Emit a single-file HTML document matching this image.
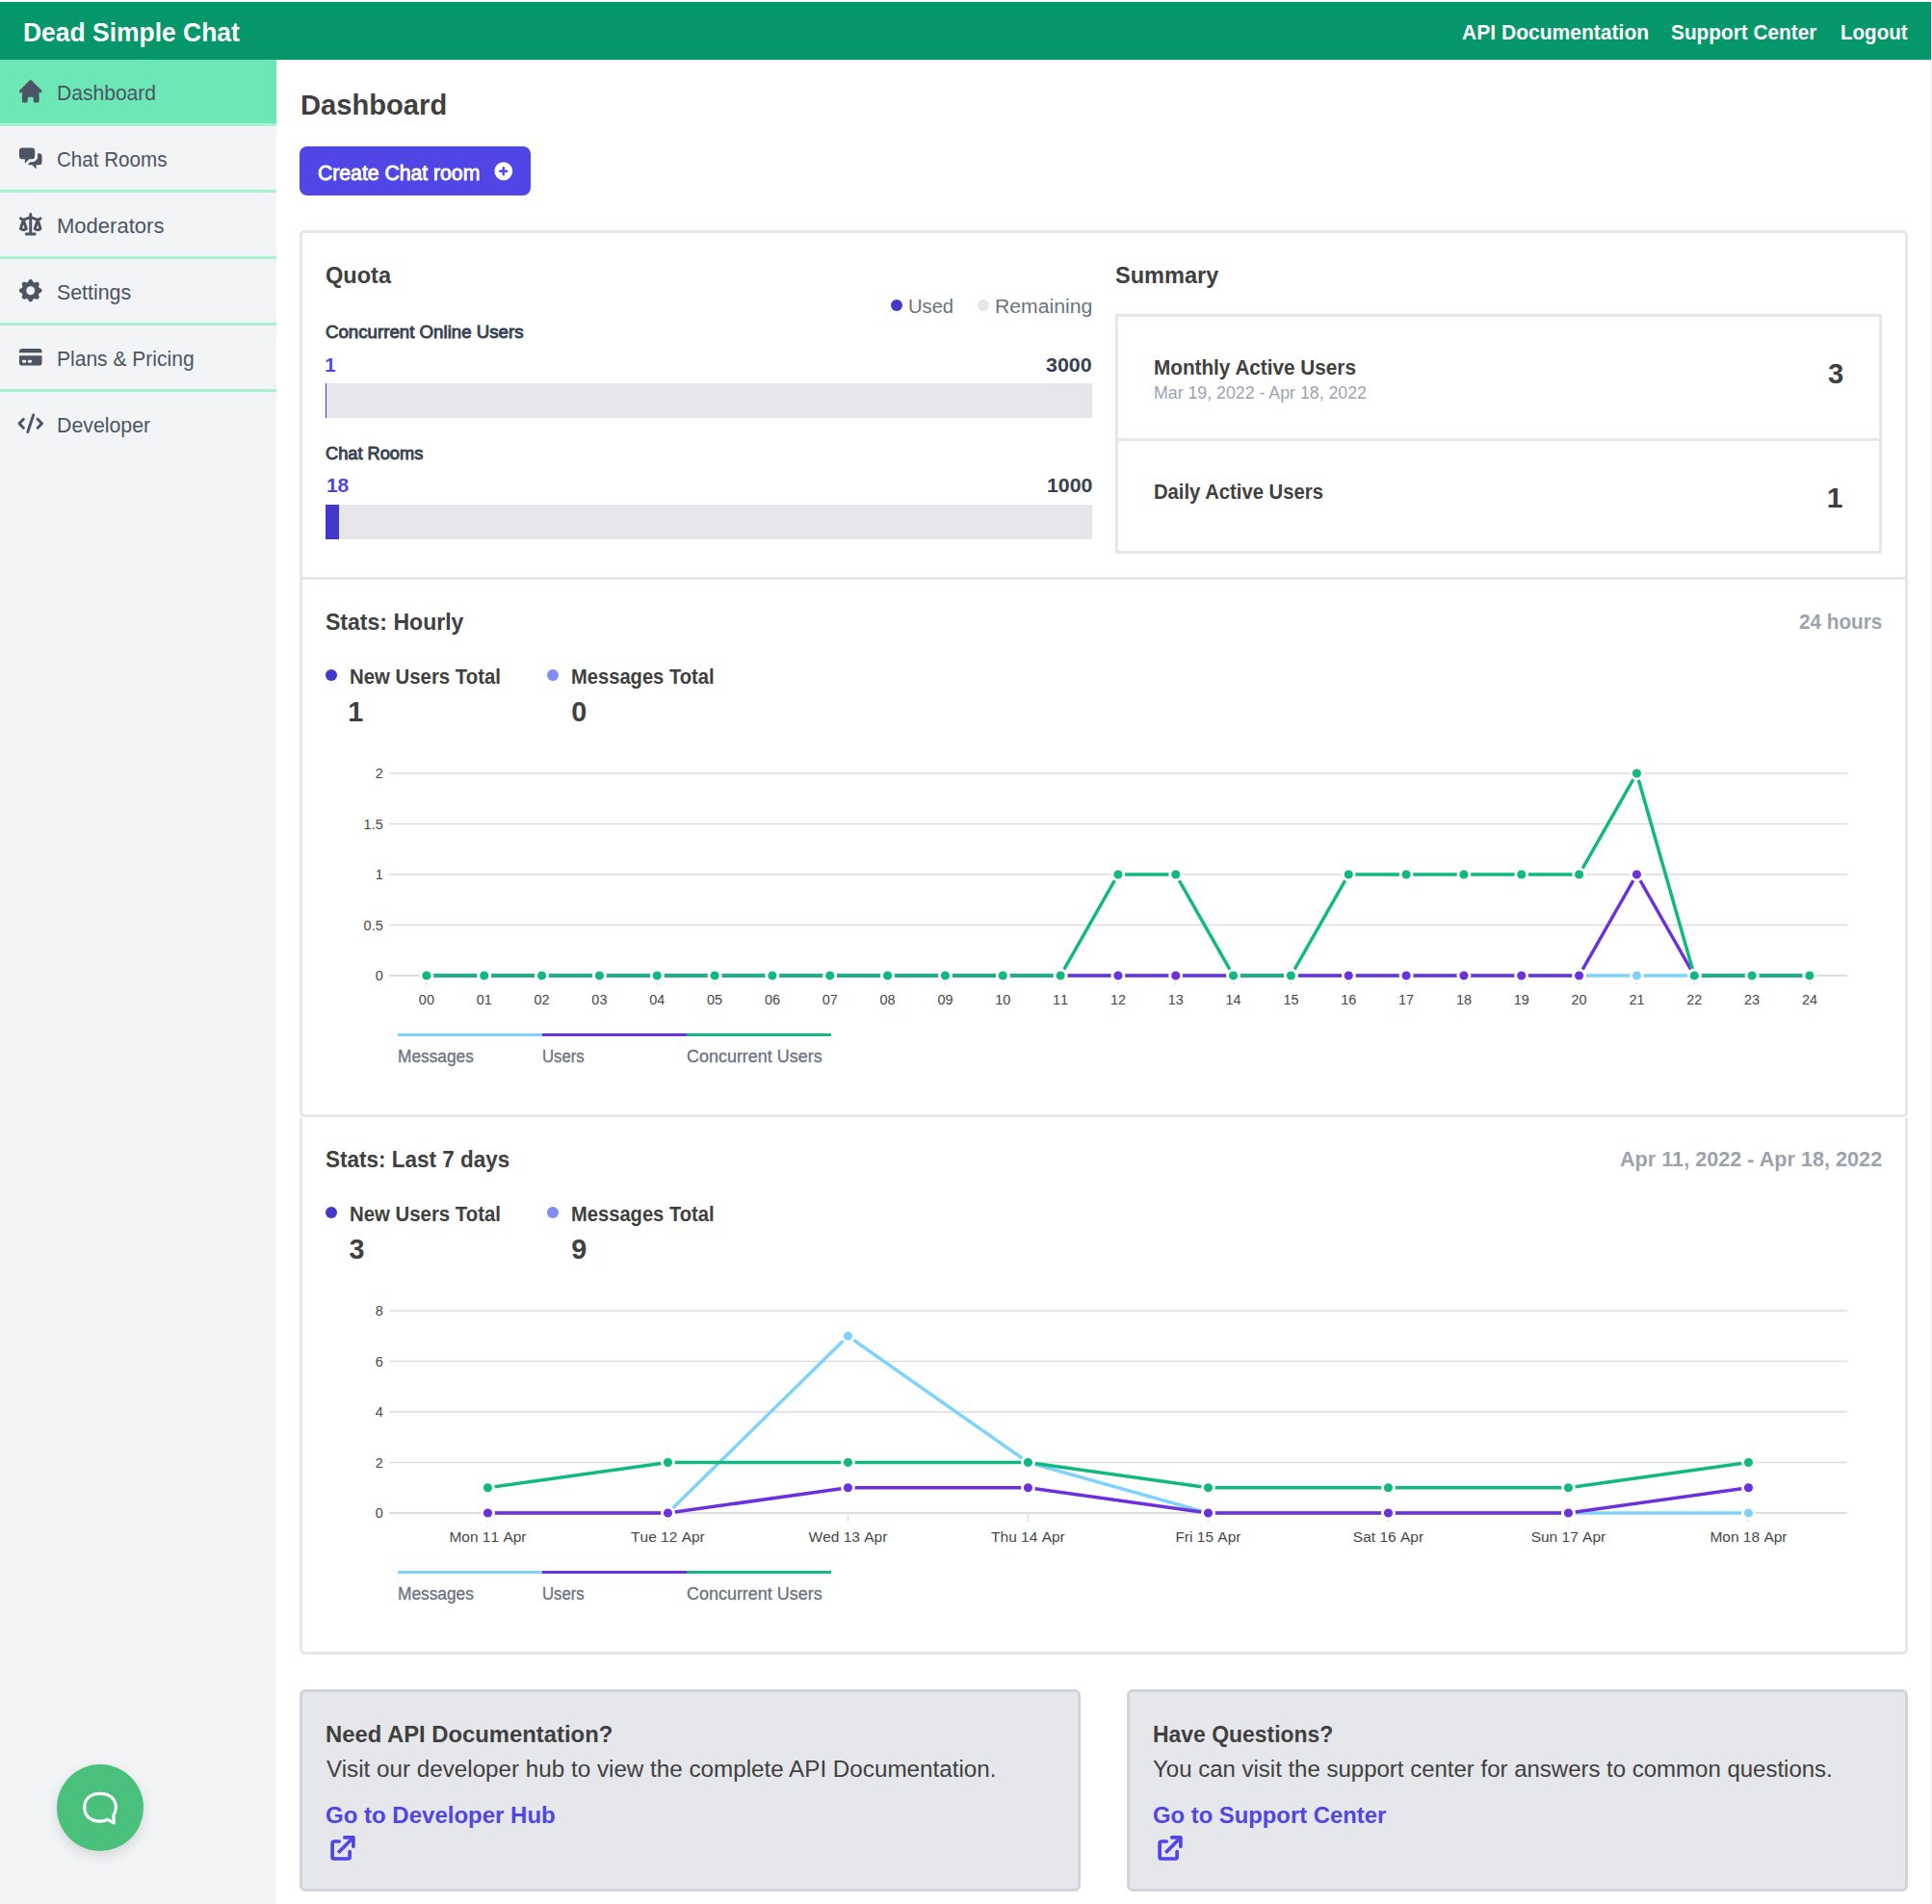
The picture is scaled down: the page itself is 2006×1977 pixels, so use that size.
<!DOCTYPE html><html lang="en"><head><meta charset="utf-8"><title>Dead Simple Chat - Dashboard</title><style>
*{box-sizing:border-box;margin:0;padding:0}
html,body{width:2006px;height:1977px;background:#fff;overflow:hidden}
body{position:relative;font-family:"Liberation Sans",sans-serif;color:#404040}
a{text-decoration:none}
.t{position:absolute;white-space:nowrap;line-height:1;transform-origin:0 50%;display:block}
header.topbar{position:absolute;left:0;top:2px;width:2005px;height:60px;background:#059669}
nav.sidebar{position:absolute;left:0;top:62px;width:287px;height:1915px;background:#f3f4f6}
nav.sidebar a.item{position:absolute;left:0;width:287px;height:69px;border-bottom:3px solid #a7f3d0;display:block}
nav.sidebar a.active{background:#6ee7b7}
nav.sidebar a.last{border-bottom:0}
nav.sidebar svg{position:absolute;left:16.6px;top:18.25px;width:29.5px;height:29.5px;fill:#4b5563}
main{position:absolute;left:287px;top:62px;width:1718px;height:1915px}
.btn{position:absolute;left:24px;top:90px;width:240px;height:51px;border-radius:8px;background:#4f46e5;border:0}
.card{position:absolute;border:3px solid #e5e7eb;background:#fff}
.sep{position:absolute;background:#e5e7eb}
.bar{position:absolute;width:796px;height:36px;background:#e5e7eb}
.bar i{position:absolute;left:0;top:0;height:36px;background:#4338ca;display:block}
.semi{-webkit-text-stroke:0.85px currentColor}
.med{-webkit-text-stroke:0.3px #6b7280}
.dot{position:absolute;border-radius:50%;display:block}
.help{position:absolute;border:3px solid #d1d5db;background:#e5e7eb;border-radius:6px}
.chat{position:absolute;left:59px;top:1832px;width:90px;height:90px;border-radius:50%;background:#49c17d;box-shadow:0 5px 14px rgba(0,0,0,.13);border:0}
svg{display:block;overflow:visible;position:absolute}
svg text{font-family:"Liberation Sans",sans-serif;font-kerning:none}
</style></head><body>
<header class="topbar">
<a class="t " style="left:23.81px;top:19.00px;font-size:26.89px;font-weight:700;color:#fff;transform:scaleX(0.9842)">Dead Simple Chat</a>
<nav>
<a class="t " style="left:1517.52px;top:21.20px;font-size:21.66px;font-weight:700;color:#fff;transform:scaleX(0.9720)">API Documentation</a>
<a class="t " style="left:1735.33px;top:21.20px;font-size:21.66px;font-weight:700;color:#fff;transform:scaleX(0.9608)">Support Center</a>
<a class="t " style="left:1911.41px;top:21.20px;font-size:21.66px;font-weight:700;color:#fff;transform:scaleX(0.9493)">Logout</a>
</nav></header>
<nav class="sidebar">
<a class="item active" style="top:0px"><svg viewBox="0 0 20 20"><path d="M10.707 2.293a1 1 0 00-1.414 0l-7 7a1 1 0 001.414 1.414L4 10.414V17a1 1 0 001 1h2a1 1 0 001-1v-2a1 1 0 011-1h2a1 1 0 011 1v2a1 1 0 001 1h2a1 1 0 001-1v-6.586l.293.293a1 1 0 001.414-1.414l-7-7z"/></svg>
<span class="t " style="left:59.06px;top:24.50px;font-size:21.51px;font-weight:400;color:#4b5563;transform:scaleX(0.9797)">Dashboard</span>
</a>
<a class="item " style="top:69px"><svg viewBox="0 0 20 20"><path d="M2 5a2 2 0 012-2h7a2 2 0 012 2v4a2 2 0 01-2 2H9l-3 3v-3H4a2 2 0 01-2-2V5z"/><path d="M15 7v2a4 4 0 01-4 4H9.828l-1.766 1.767c.28.149.599.233.938.233h2l3 3v-3h2a2 2 0 002-2V9a2 2 0 00-2-2h-1z"/></svg>
<span class="t " style="left:58.92px;top:24.50px;font-size:21.51px;font-weight:400;color:#4b5563;transform:scaleX(0.9577)">Chat Rooms</span>
</a>
<a class="item " style="top:138px"><svg viewBox="0 0 20 20"><path fill-rule="evenodd" clip-rule="evenodd" d="M10 2a1 1 0 011 1v1.323l3.954 1.582 1.599-.8a1 1 0 01.894 1.79l-1.233.616 1.738 5.42a1 1 0 01-.285 1.05A3.989 3.989 0 0115 15a3.989 3.989 0 01-2.667-1.019 1 1 0 01-.285-1.05l1.715-5.349L11 6.477V16h2a1 1 0 110 2H7a1 1 0 110-2h2V6.477L6.237 7.582l1.715 5.349a1 1 0 01-.285 1.05A3.989 3.989 0 015 15a3.989 3.989 0 01-2.667-1.019 1 1 0 01-.285-1.05l1.738-5.42-1.233-.617a1 1 0 01.894-1.788l1.599.799L9 4.323V3a1 1 0 011-1zm-5 8.274l-.818 2.552c.25.112.526.174.818.174.292 0 .569-.062.818-.174L5 10.274zm10 0l-.818 2.552c.25.112.526.174.818.174.292 0 .569-.062.818-.174L15 10.274z"/></svg>
<span class="t " style="left:58.98px;top:24.50px;font-size:21.51px;font-weight:400;color:#4b5563;transform:scaleX(1.0248)">Moderators</span>
</a>
<a class="item " style="top:207px"><svg viewBox="0 0 20 20"><path fill-rule="evenodd" clip-rule="evenodd" d="M11.49 3.17c-.38-1.56-2.6-1.56-2.98 0a1.532 1.532 0 01-2.286.948c-1.372-.836-2.942.734-2.106 2.106.54.886.061 2.042-.947 2.287-1.561.379-1.561 2.6 0 2.978a1.532 1.532 0 01.947 2.287c-.836 1.372.734 2.942 2.106 2.106a1.532 1.532 0 012.287.947c.379 1.561 2.6 1.561 2.978 0a1.533 1.533 0 012.287-.947c1.372.836 2.942-.734 2.106-2.106a1.533 1.533 0 01.947-2.287c1.561-.379 1.561-2.6 0-2.978a1.532 1.532 0 01-.947-2.287c.836-1.372-.734-2.942-2.106-2.106a1.532 1.532 0 01-2.287-.947zM10 13a3 3 0 100-6 3 3 0 000 6z"/></svg>
<span class="t " style="left:58.99px;top:24.50px;font-size:21.51px;font-weight:400;color:#4b5563;transform:scaleX(0.9929)">Settings</span>
</a>
<a class="item " style="top:276px"><svg viewBox="0 0 20 20"><path d="M4 4a2 2 0 00-2 2v1h16V6a2 2 0 00-2-2H4z"/><path fill-rule="evenodd" clip-rule="evenodd" d="M18 9H2v5a2 2 0 002 2h12a2 2 0 002-2V9zM4 13a1 1 0 011-1h1a1 1 0 110 2H5a1 1 0 01-1-1zm5-1a1 1 0 100 2h1a1 1 0 100-2H9z"/></svg>
<span class="t " style="left:59.06px;top:24.50px;font-size:21.51px;font-weight:400;color:#4b5563;transform:scaleX(0.9781)">Plans &amp; Pricing</span>
</a>
<a class="item last" style="top:345px"><svg viewBox="0 0 20 20"><path fill-rule="evenodd" clip-rule="evenodd" d="M12.316 3.051a1 1 0 01.633 1.265l-4 12a1 1 0 11-1.898-.632l4-12a1 1 0 011.265-.633zM5.707 6.293a1 1 0 010 1.414L3.414 10l2.293 2.293a1 1 0 11-1.414 1.414l-3-3a1 1 0 010-1.414l3-3a1 1 0 011.414 0zm8.586 0a1 1 0 011.414 0l3 3a1 1 0 010 1.414l-3 3a1 1 0 11-1.414-1.414L16.586 10l-2.293-2.293a1 1 0 010-1.414z"/></svg>
<span class="t " style="left:59.04px;top:24.50px;font-size:21.51px;font-weight:400;color:#4b5563;transform:scaleX(0.9912)">Developer</span>
</a>
</nav>
<main>
<h1 class="t " style="left:24.53px;top:31.80px;font-size:30.23px;font-weight:700;color:#404040;transform:scaleX(0.9643)">Dashboard</h1>
<button class="btn">
<span class="t semi" style="left:19.39px;top:16.70px;font-size:21.66px;font-weight:400;color:#fff;transform:scaleX(0.9777)">Create Chat room</span>
<svg viewBox="0 0 20 20" style="left:200.20px;top:14.40px;width:23.6px;height:23.6px;fill:#fff"><path fill-rule="evenodd" clip-rule="evenodd" d="M10 18a8 8 0 100-16 8 8 0 000 16zm1-11a1 1 0 10-2 0v2H7a1 1 0 100 2h2v2a1 1 0 102 0v-2h2a1 1 0 100-2h-2V7z"/></svg>
</button>
<section class="card" style="left:24px;top:177px;width:1670px;height:921px;border-radius:5px">
<div class="quota">
<h2 class="t " style="left:23.91px;top:31.80px;font-size:24.13px;font-weight:700;color:#404040;transform:scaleX(0.9762)">Quota</h2>
<i class="dot" style="left:610.8px;top:68.9px;width:12.4px;height:12.4px;background:#4338ca"></i>
<span class="t " style="left:629.44px;top:66.30px;font-size:20.79px;font-weight:400;color:#6b7280;transform:scaleX(0.9699)">Used</span>
<i class="dot" style="left:701.0px;top:68.9px;width:12.4px;height:12.4px;background:#e5e7eb"></i>
<span class="t " style="left:719.15px;top:66.30px;font-size:20.79px;font-weight:400;color:#6b7280;transform:scaleX(1.0193)">Remaining</span>
<span class="t semi" style="left:23.92px;top:94.80px;font-size:17.88px;font-weight:400;color:#374151;transform:scaleX(1.0457)">Concurrent Online Users</span>
<span class="t " style="left:23.23px;top:126.70px;font-size:20.49px;font-weight:700;color:#4f46e5;transform:scaleX(1.0000)">1</span>
<span class="t " style="left:772.47px;top:126.70px;font-size:20.49px;font-weight:700;color:#374151;transform:scaleX(1.0425)">3000</span>
<div class="bar" style="left:24px;top:156px"><i style="width:1px"></i></div>
<span class="t semi" style="left:23.94px;top:220.80px;font-size:17.59px;font-weight:400;color:#374151;transform:scaleX(1.0364)">Chat Rooms</span>
<span class="t " style="left:24.54px;top:252.40px;font-size:20.35px;font-weight:700;color:#4f46e5;transform:scaleX(1.0263)">18</span>
<span class="t " style="left:772.62px;top:252.40px;font-size:20.35px;font-weight:700;color:#374151;transform:scaleX(1.0466)">1000</span>
<div class="bar" style="left:24px;top:282px"><i style="width:14px"></i></div>
</div>
<div class="summary">
<h2 class="t " style="left:844.14px;top:31.80px;font-size:24.13px;font-weight:700;color:#404040;transform:scaleX(0.9755)">Summary</h2>
<div style="position:absolute;left:844px;top:84px;width:796px;height:249px;border:3px solid #e5e7eb">
<div class="sep" style="left:0;top:126px;width:790px;height:3px"></div>
<span class="t " style="left:36.60px;top:41.90px;font-size:21.22px;font-weight:700;color:#404040;transform:scaleX(0.9763)">Monthly Active Users</span>
<span class="t " style="left:36.53px;top:70.60px;font-size:17.73px;font-weight:400;color:#9ca3af;transform:scaleX(1.0015)">Mar 19, 2022 - Apr 18, 2022</span>
<span class="t " style="left:737.06px;top:43.80px;font-size:29.36px;font-weight:700;color:#404040;transform:scaleX(1.0000)">3</span>
<span class="t " style="left:36.63px;top:172.00px;font-size:21.51px;font-weight:700;color:#404040;transform:scaleX(0.9414)">Daily Active Users</span>
<span class="t " style="left:735.64px;top:173.20px;font-size:29.94px;font-weight:700;color:#404040;transform:scaleX(1.0000)">1</span>
</div></div>
<div class="sep" style="left:0;top:357px;width:1664px;height:3px"></div>
<div class="stats">
<h2 class="t " style="left:24.36px;top:392.00px;font-size:23.98px;font-weight:700;color:#404040;transform:scaleX(0.9613)">Stats: Hourly</h2>
<span class="t " style="left:1554.13px;top:393.40px;font-size:22.53px;font-weight:700;color:#9ca3af;transform:scaleX(0.9192)">24 hours</span>
<i class="dot" style="left:23.8px;top:453.0px;width:12.4px;height:12.4px;background:#4338ca"></i>
<span class="t " style="left:49.22px;top:451.00px;font-size:21.51px;font-weight:700;color:#404040;transform:scaleX(0.9472)">New Users Total</span>
<span class="t " style="left:47.14px;top:482.70px;font-size:28.78px;font-weight:700;color:#404040;transform:scaleX(1.0000)">1</span>
<i class="dot" style="left:253.8px;top:453.0px;width:12.4px;height:12.4px;background:#818cf8"></i>
<span class="t " style="left:279.24px;top:451.00px;font-size:21.51px;font-weight:700;color:#404040;transform:scaleX(0.9368)">Messages Total</span>
<span class="t " style="left:279.19px;top:482.70px;font-size:28.78px;font-weight:700;color:#404040;transform:scaleX(1.0000)">0</span>
<svg width="1616" height="290" style="left:24px;top:528px" role="img"><g transform="translate(-338,-770)">
<line x1="404" x2="1918" y1="803.00" y2="803.00" stroke="#dddddd" stroke-width="1.4"/>
<line x1="404" x2="1918" y1="855.50" y2="855.50" stroke="#dddddd" stroke-width="1.4"/>
<line x1="404" x2="1918" y1="908.00" y2="908.00" stroke="#dddddd" stroke-width="1.4"/>
<line x1="404" x2="1918" y1="960.50" y2="960.50" stroke="#dddddd" stroke-width="1.4"/>
<line x1="404" x2="1918" y1="1013.00" y2="1013.00" stroke="#dddddd" stroke-width="1.9"/>
<text x="397.7" y="808.00" text-anchor="end" font-size="14.44" fill="#474747">2</text>
<text x="397.7" y="860.50" text-anchor="end" font-size="14.44" fill="#474747">1.5</text>
<text x="397.7" y="913.00" text-anchor="end" font-size="14.44" fill="#474747">1</text>
<text x="397.7" y="965.50" text-anchor="end" font-size="14.44" fill="#474747">0.5</text>
<text x="397.7" y="1018.00" text-anchor="end" font-size="14.44" fill="#474747">0</text>
<line x1="442.90" x2="442.90" y1="1013.00" y2="1022.20" stroke="#dddddd" stroke-width="1.4"/>
<text x="442.90" y="1043.00" text-anchor="middle" font-size="14.44" fill="#474747">00</text>
<line x1="502.73" x2="502.73" y1="1013.00" y2="1022.20" stroke="#dddddd" stroke-width="1.4"/>
<text x="502.73" y="1043.00" text-anchor="middle" font-size="14.44" fill="#474747">01</text>
<line x1="562.57" x2="562.57" y1="1013.00" y2="1022.20" stroke="#dddddd" stroke-width="1.4"/>
<text x="562.57" y="1043.00" text-anchor="middle" font-size="14.44" fill="#474747">02</text>
<line x1="622.40" x2="622.40" y1="1013.00" y2="1022.20" stroke="#dddddd" stroke-width="1.4"/>
<text x="622.40" y="1043.00" text-anchor="middle" font-size="14.44" fill="#474747">03</text>
<line x1="682.24" x2="682.24" y1="1013.00" y2="1022.20" stroke="#dddddd" stroke-width="1.4"/>
<text x="682.24" y="1043.00" text-anchor="middle" font-size="14.44" fill="#474747">04</text>
<line x1="742.08" x2="742.08" y1="1013.00" y2="1022.20" stroke="#dddddd" stroke-width="1.4"/>
<text x="742.08" y="1043.00" text-anchor="middle" font-size="14.44" fill="#474747">05</text>
<line x1="801.91" x2="801.91" y1="1013.00" y2="1022.20" stroke="#dddddd" stroke-width="1.4"/>
<text x="801.91" y="1043.00" text-anchor="middle" font-size="14.44" fill="#474747">06</text>
<line x1="861.75" x2="861.75" y1="1013.00" y2="1022.20" stroke="#dddddd" stroke-width="1.4"/>
<text x="861.75" y="1043.00" text-anchor="middle" font-size="14.44" fill="#474747">07</text>
<line x1="921.58" x2="921.58" y1="1013.00" y2="1022.20" stroke="#dddddd" stroke-width="1.4"/>
<text x="921.58" y="1043.00" text-anchor="middle" font-size="14.44" fill="#474747">08</text>
<line x1="981.41" x2="981.41" y1="1013.00" y2="1022.20" stroke="#dddddd" stroke-width="1.4"/>
<text x="981.41" y="1043.00" text-anchor="middle" font-size="14.44" fill="#474747">09</text>
<line x1="1041.25" x2="1041.25" y1="1013.00" y2="1022.20" stroke="#dddddd" stroke-width="1.4"/>
<text x="1041.25" y="1043.00" text-anchor="middle" font-size="14.44" fill="#474747">10</text>
<line x1="1101.09" x2="1101.09" y1="1013.00" y2="1022.20" stroke="#dddddd" stroke-width="1.4"/>
<text x="1101.09" y="1043.00" text-anchor="middle" font-size="14.44" fill="#474747">11</text>
<line x1="1160.92" x2="1160.92" y1="1013.00" y2="1022.20" stroke="#dddddd" stroke-width="1.4"/>
<text x="1160.92" y="1043.00" text-anchor="middle" font-size="14.44" fill="#474747">12</text>
<line x1="1220.76" x2="1220.76" y1="1013.00" y2="1022.20" stroke="#dddddd" stroke-width="1.4"/>
<text x="1220.76" y="1043.00" text-anchor="middle" font-size="14.44" fill="#474747">13</text>
<line x1="1280.59" x2="1280.59" y1="1013.00" y2="1022.20" stroke="#dddddd" stroke-width="1.4"/>
<text x="1280.59" y="1043.00" text-anchor="middle" font-size="14.44" fill="#474747">14</text>
<line x1="1340.42" x2="1340.42" y1="1013.00" y2="1022.20" stroke="#dddddd" stroke-width="1.4"/>
<text x="1340.42" y="1043.00" text-anchor="middle" font-size="14.44" fill="#474747">15</text>
<line x1="1400.26" x2="1400.26" y1="1013.00" y2="1022.20" stroke="#dddddd" stroke-width="1.4"/>
<text x="1400.26" y="1043.00" text-anchor="middle" font-size="14.44" fill="#474747">16</text>
<line x1="1460.10" x2="1460.10" y1="1013.00" y2="1022.20" stroke="#dddddd" stroke-width="1.4"/>
<text x="1460.10" y="1043.00" text-anchor="middle" font-size="14.44" fill="#474747">17</text>
<line x1="1519.93" x2="1519.93" y1="1013.00" y2="1022.20" stroke="#dddddd" stroke-width="1.4"/>
<text x="1519.93" y="1043.00" text-anchor="middle" font-size="14.44" fill="#474747">18</text>
<line x1="1579.76" x2="1579.76" y1="1013.00" y2="1022.20" stroke="#dddddd" stroke-width="1.4"/>
<text x="1579.76" y="1043.00" text-anchor="middle" font-size="14.44" fill="#474747">19</text>
<line x1="1639.60" x2="1639.60" y1="1013.00" y2="1022.20" stroke="#dddddd" stroke-width="1.4"/>
<text x="1639.60" y="1043.00" text-anchor="middle" font-size="14.44" fill="#474747">20</text>
<line x1="1699.43" x2="1699.43" y1="1013.00" y2="1022.20" stroke="#dddddd" stroke-width="1.4"/>
<text x="1699.43" y="1043.00" text-anchor="middle" font-size="14.44" fill="#474747">21</text>
<line x1="1759.27" x2="1759.27" y1="1013.00" y2="1022.20" stroke="#dddddd" stroke-width="1.4"/>
<text x="1759.27" y="1043.00" text-anchor="middle" font-size="14.44" fill="#474747">22</text>
<line x1="1819.11" x2="1819.11" y1="1013.00" y2="1022.20" stroke="#dddddd" stroke-width="1.4"/>
<text x="1819.11" y="1043.00" text-anchor="middle" font-size="14.44" fill="#474747">23</text>
<line x1="1878.94" x2="1878.94" y1="1013.00" y2="1022.20" stroke="#dddddd" stroke-width="1.4"/>
<text x="1878.94" y="1043.00" text-anchor="middle" font-size="14.44" fill="#474747">24</text>
<polyline points="442.90,1013.00 502.73,1013.00 562.57,1013.00 622.40,1013.00 682.24,1013.00 742.08,1013.00 801.91,1013.00 861.75,1013.00 921.58,1013.00 981.41,1013.00 1041.25,1013.00 1101.09,1013.00 1160.92,1013.00 1220.76,1013.00 1280.59,1013.00 1340.42,1013.00 1400.26,1013.00 1460.10,1013.00 1519.93,1013.00 1579.76,1013.00 1639.60,1013.00 1699.43,1013.00 1759.27,1013.00 1819.11,1013.00 1878.94,1013.00" fill="none" stroke="#7dd3fc" stroke-width="3.5" stroke-linejoin="miter"/>
<polyline points="442.90,1013.00 502.73,1013.00 562.57,1013.00 622.40,1013.00 682.24,1013.00 742.08,1013.00 801.91,1013.00 861.75,1013.00 921.58,1013.00 981.41,1013.00 1041.25,1013.00 1101.09,1013.00 1160.92,1013.00 1220.76,1013.00 1280.59,1013.00 1340.42,1013.00 1400.26,1013.00 1460.10,1013.00 1519.93,1013.00 1579.76,1013.00 1639.60,1013.00 1699.43,908.00 1759.27,1013.00 1819.11,1013.00 1878.94,1013.00" fill="none" stroke="#6c30dd" stroke-width="3.5" stroke-linejoin="miter"/>
<polyline points="442.90,1013.00 502.73,1013.00 562.57,1013.00 622.40,1013.00 682.24,1013.00 742.08,1013.00 801.91,1013.00 861.75,1013.00 921.58,1013.00 981.41,1013.00 1041.25,1013.00 1101.09,1013.00 1160.92,908.00 1220.76,908.00 1280.59,1013.00 1340.42,1013.00 1400.26,908.00 1460.10,908.00 1519.93,908.00 1579.76,908.00 1639.60,908.00 1699.43,803.00 1759.27,1013.00 1819.11,1013.00 1878.94,1013.00" fill="none" stroke="#10b981" stroke-width="3.5" stroke-linejoin="miter"/>
<g fill="#7dd3fc" stroke="#fff" stroke-width="2.75">
<circle cx="442.90" cy="1013.00" r="5.95"/>
<circle cx="502.73" cy="1013.00" r="5.95"/>
<circle cx="562.57" cy="1013.00" r="5.95"/>
<circle cx="622.40" cy="1013.00" r="5.95"/>
<circle cx="682.24" cy="1013.00" r="5.95"/>
<circle cx="742.08" cy="1013.00" r="5.95"/>
<circle cx="801.91" cy="1013.00" r="5.95"/>
<circle cx="861.75" cy="1013.00" r="5.95"/>
<circle cx="921.58" cy="1013.00" r="5.95"/>
<circle cx="981.41" cy="1013.00" r="5.95"/>
<circle cx="1041.25" cy="1013.00" r="5.95"/>
<circle cx="1101.09" cy="1013.00" r="5.95"/>
<circle cx="1160.92" cy="1013.00" r="5.95"/>
<circle cx="1220.76" cy="1013.00" r="5.95"/>
<circle cx="1280.59" cy="1013.00" r="5.95"/>
<circle cx="1340.42" cy="1013.00" r="5.95"/>
<circle cx="1400.26" cy="1013.00" r="5.95"/>
<circle cx="1460.10" cy="1013.00" r="5.95"/>
<circle cx="1519.93" cy="1013.00" r="5.95"/>
<circle cx="1579.76" cy="1013.00" r="5.95"/>
<circle cx="1639.60" cy="1013.00" r="5.95"/>
<circle cx="1699.43" cy="1013.00" r="5.95"/>
<circle cx="1759.27" cy="1013.00" r="5.95"/>
<circle cx="1819.11" cy="1013.00" r="5.95"/>
<circle cx="1878.94" cy="1013.00" r="5.95"/>
</g>
<g fill="#6c30dd" stroke="#fff" stroke-width="2.75">
<circle cx="442.90" cy="1013.00" r="5.95"/>
<circle cx="502.73" cy="1013.00" r="5.95"/>
<circle cx="562.57" cy="1013.00" r="5.95"/>
<circle cx="622.40" cy="1013.00" r="5.95"/>
<circle cx="682.24" cy="1013.00" r="5.95"/>
<circle cx="742.08" cy="1013.00" r="5.95"/>
<circle cx="801.91" cy="1013.00" r="5.95"/>
<circle cx="861.75" cy="1013.00" r="5.95"/>
<circle cx="921.58" cy="1013.00" r="5.95"/>
<circle cx="981.41" cy="1013.00" r="5.95"/>
<circle cx="1041.25" cy="1013.00" r="5.95"/>
<circle cx="1101.09" cy="1013.00" r="5.95"/>
<circle cx="1160.92" cy="1013.00" r="5.95"/>
<circle cx="1220.76" cy="1013.00" r="5.95"/>
<circle cx="1280.59" cy="1013.00" r="5.95"/>
<circle cx="1340.42" cy="1013.00" r="5.95"/>
<circle cx="1400.26" cy="1013.00" r="5.95"/>
<circle cx="1460.10" cy="1013.00" r="5.95"/>
<circle cx="1519.93" cy="1013.00" r="5.95"/>
<circle cx="1579.76" cy="1013.00" r="5.95"/>
<circle cx="1639.60" cy="1013.00" r="5.95"/>
<circle cx="1699.43" cy="908.00" r="5.95"/>
<circle cx="1759.27" cy="1013.00" r="5.95"/>
<circle cx="1819.11" cy="1013.00" r="5.95"/>
<circle cx="1878.94" cy="1013.00" r="5.95"/>
</g>
<g fill="#10b981" stroke="#fff" stroke-width="2.75">
<circle cx="442.90" cy="1013.00" r="5.95"/>
<circle cx="502.73" cy="1013.00" r="5.95"/>
<circle cx="562.57" cy="1013.00" r="5.95"/>
<circle cx="622.40" cy="1013.00" r="5.95"/>
<circle cx="682.24" cy="1013.00" r="5.95"/>
<circle cx="742.08" cy="1013.00" r="5.95"/>
<circle cx="801.91" cy="1013.00" r="5.95"/>
<circle cx="861.75" cy="1013.00" r="5.95"/>
<circle cx="921.58" cy="1013.00" r="5.95"/>
<circle cx="981.41" cy="1013.00" r="5.95"/>
<circle cx="1041.25" cy="1013.00" r="5.95"/>
<circle cx="1101.09" cy="1013.00" r="5.95"/>
<circle cx="1160.92" cy="908.00" r="5.95"/>
<circle cx="1220.76" cy="908.00" r="5.95"/>
<circle cx="1280.59" cy="1013.00" r="5.95"/>
<circle cx="1340.42" cy="1013.00" r="5.95"/>
<circle cx="1400.26" cy="908.00" r="5.95"/>
<circle cx="1460.10" cy="908.00" r="5.95"/>
<circle cx="1519.93" cy="908.00" r="5.95"/>
<circle cx="1579.76" cy="908.00" r="5.95"/>
<circle cx="1639.60" cy="908.00" r="5.95"/>
<circle cx="1699.43" cy="803.00" r="5.95"/>
<circle cx="1759.27" cy="1013.00" r="5.95"/>
<circle cx="1819.11" cy="1013.00" r="5.95"/>
<circle cx="1878.94" cy="1013.00" r="5.95"/>
</g>
</g></svg>
<div style="position:absolute;left:99px;top:831px;width:150px;height:3px;background:#7dd3fc"></div>
<span class="t med" style="left:99.27px;top:845.90px;font-size:18.02px;font-weight:400;color:#6b7280;transform:scaleX(0.9597)">Messages</span>
<div style="position:absolute;left:249px;top:831px;width:150px;height:3px;background:#6c30dd"></div>
<span class="t med" style="left:249.40px;top:845.90px;font-size:18.02px;font-weight:400;color:#6b7280;transform:scaleX(0.9299)">Users</span>
<div style="position:absolute;left:399px;top:831px;width:150px;height:3px;background:#10b981"></div>
<span class="t med" style="left:398.95px;top:845.90px;font-size:18.02px;font-weight:400;color:#6b7280;transform:scaleX(0.9962)">Concurrent Users</span>
</div>
</section>
<section class="card" style="left:24px;top:1098px;width:1670px;height:558px;border-top:0;border-radius:0 0 5px 5px">
<div class="stats">
<h2 class="t " style="left:24.37px;top:32.00px;font-size:23.98px;font-weight:700;color:#404040;transform:scaleX(0.9388)">Stats: Last 7 days</h2>
<span class="t " style="left:1368.11px;top:33.40px;font-size:22.53px;font-weight:700;color:#9ca3af;transform:scaleX(0.9608)">Apr 11, 2022 - Apr 18, 2022</span>
<i class="dot" style="left:23.8px;top:93.0px;width:12.4px;height:12.4px;background:#4338ca"></i>
<span class="t " style="left:49.22px;top:91.00px;font-size:21.51px;font-weight:700;color:#404040;transform:scaleX(0.9472)">New Users Total</span>
<span class="t " style="left:48.52px;top:122.70px;font-size:28.78px;font-weight:700;color:#404040;transform:scaleX(1.0000)">3</span>
<i class="dot" style="left:253.8px;top:93.0px;width:12.4px;height:12.4px;background:#818cf8"></i>
<span class="t " style="left:279.24px;top:91.00px;font-size:21.51px;font-weight:700;color:#404040;transform:scaleX(0.9368)">Messages Total</span>
<span class="t " style="left:279.19px;top:122.70px;font-size:28.78px;font-weight:700;color:#404040;transform:scaleX(1.0000)">9</span>
<svg width="1616" height="290" style="left:24px;top:168px" role="img"><g transform="translate(-338,-1328)">
<line x1="404" x2="1918" y1="1361.00" y2="1361.00" stroke="#dddddd" stroke-width="1.4"/>
<line x1="404" x2="1918" y1="1413.50" y2="1413.50" stroke="#dddddd" stroke-width="1.4"/>
<line x1="404" x2="1918" y1="1466.00" y2="1466.00" stroke="#dddddd" stroke-width="1.4"/>
<line x1="404" x2="1918" y1="1518.50" y2="1518.50" stroke="#dddddd" stroke-width="1.4"/>
<line x1="404" x2="1918" y1="1571.00" y2="1571.00" stroke="#dddddd" stroke-width="1.9"/>
<text x="397.7" y="1366.00" text-anchor="end" font-size="14.44" fill="#474747">8</text>
<text x="397.7" y="1418.50" text-anchor="end" font-size="14.44" fill="#474747">6</text>
<text x="397.7" y="1471.00" text-anchor="end" font-size="14.44" fill="#474747">4</text>
<text x="397.7" y="1523.50" text-anchor="end" font-size="14.44" fill="#474747">2</text>
<text x="397.7" y="1576.00" text-anchor="end" font-size="14.44" fill="#474747">0</text>
<line x1="506.45" x2="506.45" y1="1571.00" y2="1580.20" stroke="#dddddd" stroke-width="1.4"/>
<text x="506.45" y="1601.00" text-anchor="middle" font-size="15.50" fill="#474747">Mon 11 Apr</text>
<line x1="693.45" x2="693.45" y1="1571.00" y2="1580.20" stroke="#dddddd" stroke-width="1.4"/>
<text x="693.45" y="1601.00" text-anchor="middle" font-size="15.50" fill="#474747">Tue 12 Apr</text>
<line x1="880.45" x2="880.45" y1="1571.00" y2="1580.20" stroke="#dddddd" stroke-width="1.4"/>
<text x="880.45" y="1601.00" text-anchor="middle" font-size="15.50" fill="#474747">Wed 13 Apr</text>
<line x1="1067.45" x2="1067.45" y1="1571.00" y2="1580.20" stroke="#dddddd" stroke-width="1.4"/>
<text x="1067.45" y="1601.00" text-anchor="middle" font-size="15.50" fill="#474747">Thu 14 Apr</text>
<line x1="1254.45" x2="1254.45" y1="1571.00" y2="1580.20" stroke="#dddddd" stroke-width="1.4"/>
<text x="1254.45" y="1601.00" text-anchor="middle" font-size="15.50" fill="#474747">Fri 15 Apr</text>
<line x1="1441.45" x2="1441.45" y1="1571.00" y2="1580.20" stroke="#dddddd" stroke-width="1.4"/>
<text x="1441.45" y="1601.00" text-anchor="middle" font-size="15.50" fill="#474747">Sat 16 Apr</text>
<line x1="1628.45" x2="1628.45" y1="1571.00" y2="1580.20" stroke="#dddddd" stroke-width="1.4"/>
<text x="1628.45" y="1601.00" text-anchor="middle" font-size="15.50" fill="#474747">Sun 17 Apr</text>
<line x1="1815.45" x2="1815.45" y1="1571.00" y2="1580.20" stroke="#dddddd" stroke-width="1.4"/>
<text x="1815.45" y="1601.00" text-anchor="middle" font-size="15.50" fill="#474747">Mon 18 Apr</text>
<polyline points="506.45,1571.00 693.45,1571.00 880.45,1387.25 1067.45,1518.50 1254.45,1571.00 1441.45,1571.00 1628.45,1571.00 1815.45,1571.00" fill="none" stroke="#7dd3fc" stroke-width="3.5" stroke-linejoin="miter"/>
<polyline points="506.45,1571.00 693.45,1571.00 880.45,1544.75 1067.45,1544.75 1254.45,1571.00 1441.45,1571.00 1628.45,1571.00 1815.45,1544.75" fill="none" stroke="#6c30dd" stroke-width="3.5" stroke-linejoin="miter"/>
<polyline points="506.45,1544.75 693.45,1518.50 880.45,1518.50 1067.45,1518.50 1254.45,1544.75 1441.45,1544.75 1628.45,1544.75 1815.45,1518.50" fill="none" stroke="#10b981" stroke-width="3.5" stroke-linejoin="miter"/>
<g fill="#7dd3fc" stroke="#fff" stroke-width="2.75">
<circle cx="506.45" cy="1571.00" r="5.95"/>
<circle cx="693.45" cy="1571.00" r="5.95"/>
<circle cx="880.45" cy="1387.25" r="5.95"/>
<circle cx="1067.45" cy="1518.50" r="5.95"/>
<circle cx="1254.45" cy="1571.00" r="5.95"/>
<circle cx="1441.45" cy="1571.00" r="5.95"/>
<circle cx="1628.45" cy="1571.00" r="5.95"/>
<circle cx="1815.45" cy="1571.00" r="5.95"/>
</g>
<g fill="#6c30dd" stroke="#fff" stroke-width="2.75">
<circle cx="506.45" cy="1571.00" r="5.95"/>
<circle cx="693.45" cy="1571.00" r="5.95"/>
<circle cx="880.45" cy="1544.75" r="5.95"/>
<circle cx="1067.45" cy="1544.75" r="5.95"/>
<circle cx="1254.45" cy="1571.00" r="5.95"/>
<circle cx="1441.45" cy="1571.00" r="5.95"/>
<circle cx="1628.45" cy="1571.00" r="5.95"/>
<circle cx="1815.45" cy="1544.75" r="5.95"/>
</g>
<g fill="#10b981" stroke="#fff" stroke-width="2.75">
<circle cx="506.45" cy="1544.75" r="5.95"/>
<circle cx="693.45" cy="1518.50" r="5.95"/>
<circle cx="880.45" cy="1518.50" r="5.95"/>
<circle cx="1067.45" cy="1518.50" r="5.95"/>
<circle cx="1254.45" cy="1544.75" r="5.95"/>
<circle cx="1441.45" cy="1544.75" r="5.95"/>
<circle cx="1628.45" cy="1544.75" r="5.95"/>
<circle cx="1815.45" cy="1518.50" r="5.95"/>
</g>
</g></svg>
<div style="position:absolute;left:99px;top:471px;width:150px;height:3px;background:#7dd3fc"></div>
<span class="t med" style="left:99.27px;top:485.90px;font-size:18.02px;font-weight:400;color:#6b7280;transform:scaleX(0.9597)">Messages</span>
<div style="position:absolute;left:249px;top:471px;width:150px;height:3px;background:#6c30dd"></div>
<span class="t med" style="left:249.40px;top:485.90px;font-size:18.02px;font-weight:400;color:#6b7280;transform:scaleX(0.9299)">Users</span>
<div style="position:absolute;left:399px;top:471px;width:150px;height:3px;background:#10b981"></div>
<span class="t med" style="left:398.95px;top:485.90px;font-size:18.02px;font-weight:400;color:#6b7280;transform:scaleX(0.9962)">Concurrent Users</span>
</div>
</section>
<section class="help" style="left:24px;top:1692px;width:811px;height:210px">
<h3 class="t " style="left:24.39px;top:33.00px;font-size:23.40px;font-weight:700;color:#404040;transform:scaleX(1.0184)">Need API Documentation?</h3>
<p class="t " style="left:25.03px;top:68.90px;font-size:23.55px;font-weight:400;color:#404040;transform:scaleX(1.0284)">Visit our developer hub to view the complete API Documentation.</p>
<a class="t " style="left:24.19px;top:116.50px;font-size:23.55px;font-weight:700;color:#4f46e5;transform:scaleX(1.0196)">Go to Developer Hub</a>
<svg viewBox="0 0 32 32" style="left:26.0px;top:146.0px;width:32px;height:32px" fill="none" stroke="#4f46e5" stroke-width="3.7" stroke-linecap="round" stroke-linejoin="round"><path d="M12.2 9H6.8a1.7 1.7 0 0 0-1.7 1.7V25.3a1.7 1.7 0 0 0 1.7 1.7H21.4a1.7 1.7 0 0 0 1.7-1.7V19.6M17.8 4.95H26.87V14.2"/><path stroke-linecap="butt" d="M26.87 4.95L11.2 20.7"/></svg>
</section>
<section class="help" style="left:883px;top:1692px;width:811px;height:210px">
<h3 class="t " style="left:23.95px;top:33.00px;font-size:23.40px;font-weight:700;color:#404040;transform:scaleX(0.9803)">Have Questions?</h3>
<p class="t " style="left:24.11px;top:68.90px;font-size:23.55px;font-weight:400;color:#404040;transform:scaleX(1.0187)">You can visit the support center for answers to common questions.</p>
<a class="t " style="left:23.70px;top:116.50px;font-size:23.55px;font-weight:700;color:#4f46e5;transform:scaleX(1.0119)">Go to Support Center</a>
<svg viewBox="0 0 32 32" style="left:25.7px;top:146.0px;width:32px;height:32px" fill="none" stroke="#4f46e5" stroke-width="3.7" stroke-linecap="round" stroke-linejoin="round"><path d="M12.2 9H6.8a1.7 1.7 0 0 0-1.7 1.7V25.3a1.7 1.7 0 0 0 1.7 1.7H21.4a1.7 1.7 0 0 0 1.7-1.7V19.6M17.8 4.95H26.87V14.2"/><path stroke-linecap="butt" d="M26.87 4.95L11.2 20.7"/></svg>
</section>
</main>
<div style="position:absolute;left:2005px;top:62px;width:1px;height:1915px;background:#f0f0f0"></div>
<button class="chat" aria-label="Open chat"><svg viewBox="0 0 90 90" width="90" height="90" style="left:0;top:0" fill="none" stroke="#fff" stroke-width="3.2" stroke-linejoin="round"><path d="M45 30.3C34.9 30.3 28.7 35.77 28.7 44.7C28.7 53.63 34.9 59.1 45 59.1c2.9 0 5.6-.7 8-1.8l6.3 3.5-.5-8c1.6-2.3 2.5-5.1 2.5-8.1C61.3 35.77 55.1 30.3 45 30.3z"/></svg></button>
</body></html>
